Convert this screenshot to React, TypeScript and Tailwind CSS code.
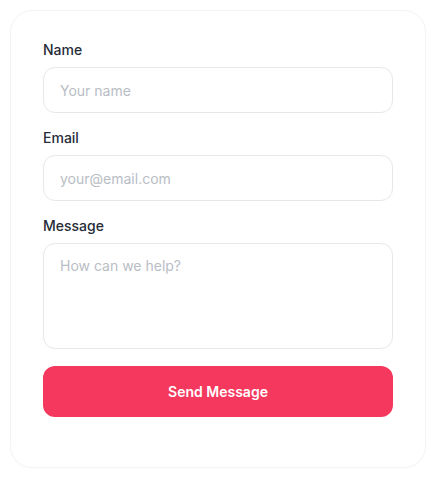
import React from 'react';

const fieldClass =
  'w-full rounded-xl border border-[#e5e7eb] bg-white px-4 text-sm text-gray-800 placeholder:text-[#b9bdc5] outline-none';

const App: React.FC = () => {
  return (
    <div className="min-h-screen bg-white p-[10px]" style={{ fontFamily: 'Inter, "Noto Sans", sans-serif' }}>
      <div className="w-[416px] rounded-[22px] border border-[#f3f4f6] bg-white px-8 pt-[29px] pb-[50px] shadow-[0_1px_3px_rgba(0,0,0,0.02)]">
        <form className="flex flex-col" onSubmit={(e) => e.preventDefault()}>
          <label className="text-sm font-medium leading-5 text-[#262c38]">Name</label>
          <input type="text" placeholder="Your name" className={`${fieldClass} mt-[7px] h-[46px]`} />

          <label className="mt-[15px] text-sm font-medium leading-5 text-[#262c38]">Email</label>
          <input type="email" placeholder="your@email.com" className={`${fieldClass} mt-[7px] h-[46px]`} />

          <label className="mt-[15px] text-sm font-medium leading-5 text-[#262c38]">Message</label>
          <textarea
            placeholder="How can we help?"
            className={`${fieldClass} mt-[7px] h-[106px] resize-none py-3 leading-5`}
          />

          <button
            type="submit"
            className="mt-[17px] h-[51px] w-full rounded-xl bg-[#f5385e] text-sm font-semibold text-white"
          >
            Send Message
          </button>
        </form>
      </div>
    </div>
  );
};

export default App;
